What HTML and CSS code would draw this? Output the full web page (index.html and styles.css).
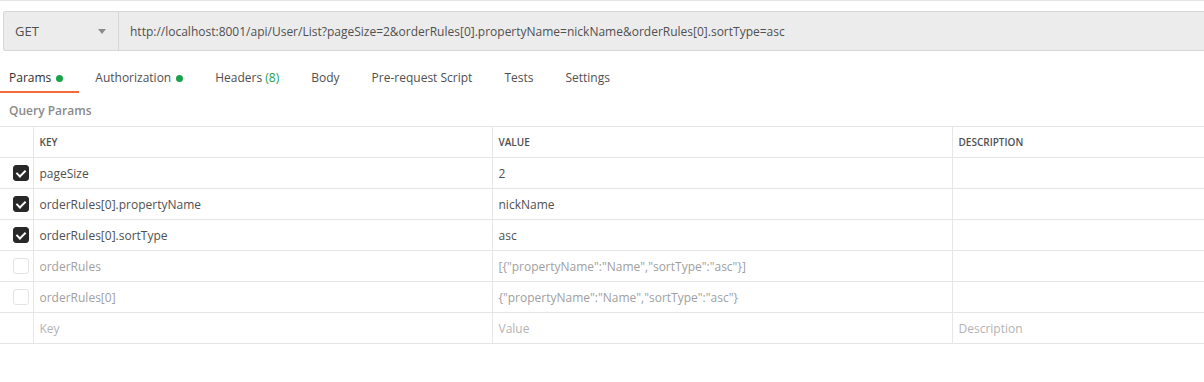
FILE: index.html
```html
<!DOCTYPE html>
<html lang="en">
<head>
  <meta charset="UTF-8">
  <title>Params</title>
  <link rel="stylesheet" href="styles.css">
</head>
<body>
  <div class="request-bar">
    <div class="method">
      <span>GET</span>
      <span class="caret"></span>
    </div>
    <div class="url">http://localhost:8001/api/User/List?pageSize=2&amp;orderRules[0].propertyName=nickName&amp;orderRules[0].sortType=asc</div>
  </div>

  <ul class="tabs">
    <li class="tab active">Params<i class="dot"></i></li>
    <li class="tab">Authorization<i class="dot"></i></li>
    <li class="tab">Headers <span class="count">(8)</span></li>
    <li class="tab">Body</li>
    <li class="tab">Pre-request Script</li>
    <li class="tab">Tests</li>
    <li class="tab">Settings</li>
  </ul>

  <div class="section-title">Query Params</div>

  <table class="params-table">
    <colgroup>
      <col class="col-check">
      <col class="col-key">
      <col class="col-value">
      <col>
    </colgroup>
    <thead>
      <tr>
        <th></th>
        <th>Key</th>
        <th>Value</th>
        <th>Description</th>
      </tr>
    </thead>
    <tbody>
      <tr>
        <td><span class="checkbox checked"></span></td>
        <td>pageSize</td>
        <td>2</td>
        <td></td>
      </tr>
      <tr>
        <td><span class="checkbox checked"></span></td>
        <td>orderRules[0].propertyName</td>
        <td>nickName</td>
        <td></td>
      </tr>
      <tr>
        <td><span class="checkbox checked"></span></td>
        <td>orderRules[0].sortType</td>
        <td>asc</td>
        <td></td>
      </tr>
      <tr class="disabled">
        <td><span class="checkbox"></span></td>
        <td>orderRules</td>
        <td>[{"propertyName":"Name","sortType":"asc"}]</td>
        <td></td>
      </tr>
      <tr class="disabled">
        <td><span class="checkbox"></span></td>
        <td>orderRules[0]</td>
        <td>{"propertyName":"Name","sortType":"asc"}</td>
        <td></td>
      </tr>
      <tr class="placeholder">
        <td></td>
        <td>Key</td>
        <td>Value</td>
        <td>Description</td>
      </tr>
    </tbody>
  </table>
</body>
</html>
```

FILE: styles.css
```css
* {
  box-sizing: border-box;
}
body {
  margin: 0;
  border-top: 1px solid #e6e6e6;
  font-family: "Open Sans", "Noto Sans", sans-serif;
  font-size: 12px;
  color: #505050;
  background-color: #fff;
}

.request-bar {
  display: flex;
  height: 40px;
  margin: 10px 0 0 3px;
  background-color: #ececec;
  border: 1px solid #d6d6d6;
  border-right: none;
  border-radius: 3px 0 0 3px;
}
.method {
  display: flex;
  align-items: center;
  justify-content: space-between;
  width: 115px;
  padding: 0 12px 0 11px;
  border-right: 1px solid #d6d6d6;
  font-size: 13px;
  color: #505050;
}
.caret {
  width: 0;
  height: 0;
  border-left: 4px solid transparent;
  border-right: 4px solid transparent;
  border-top: 5px solid #8c8c8c;
}
.url {
  display: flex;
  align-items: center;
  padding-left: 11px;
  white-space: nowrap;
}

.tabs {
  display: flex;
  list-style: none;
  margin: 8px 0 0 -7px;
  padding: 0;
}
.tab {
  display: flex;
  align-items: center;
  padding: 11px 16px 5px;
  line-height: 16px;
  border-bottom: 2px solid transparent;
  color: #505050;
  white-space: pre;
}
.tab.active {
  border-bottom-color: #f26b3a;
  color: #303030;
}
.dot {
  display: inline-block;
  width: 7px;
  height: 7px;
  margin-left: 5px;
  border-radius: 50%;
  background-color: #1aa34a;
}
.count {
  color: #1aa34a;
}

.section-title {
  padding: 10px 0 0 9px;
  line-height: 16px;
  font-weight: 600;
  color: #8a8a8a;
}

.params-table {
  width: 100%;
  margin-top: 7px;
  border-collapse: collapse;
  table-layout: fixed;
}
.col-check {
  width: 33px;
}
.col-key {
  width: 459px;
}
.col-value {
  width: 460px;
}
.params-table th,
.params-table td {
  height: 31px;
  padding: 0 0 0 6px;
  border-top: 1px solid #e6e6e6;
  border-bottom: 1px solid #e6e6e6;
  border-left: 1px solid #e6e6e6;
  text-align: left;
  white-space: nowrap;
  overflow: hidden;
}
.params-table th:first-child,
.params-table td:first-child {
  border-left: none;
  padding: 0 0 0 13px;
}
.params-table th {
  font-size: 10px;
  font-weight: 600;
  text-transform: uppercase;
  color: #505050;
}
.params-table td {
  padding-top: 1px;
}
.disabled td {
  color: #a0a0a0;
}
.placeholder td {
  color: #b3b3b3;
}

.checkbox {
  display: block;
  width: 16px;
  height: 16px;
  border: 1px solid #e3e3e3;
  border-radius: 3px;
  background-color: #fff;
  position: relative;
}
.checkbox.checked {
  border-color: #282828;
  background-color: #282828;
}
.checkbox.checked::after {
  content: "";
  position: absolute;
  left: 4px;
  top: 2px;
  width: 4px;
  height: 7px;
  border-right: 2px solid #fff;
  border-bottom: 2px solid #fff;
  transform: rotate(45deg);
}
```
